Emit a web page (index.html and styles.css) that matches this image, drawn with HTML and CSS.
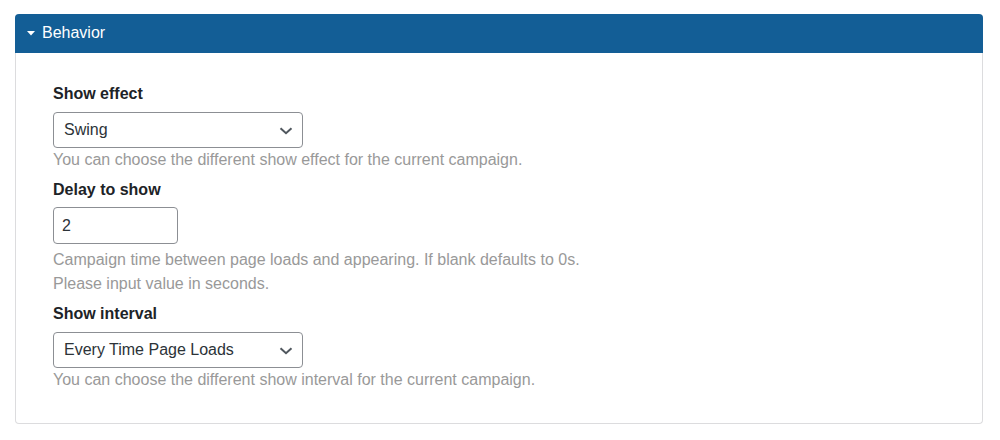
FILE: index.html
```html
<!DOCTYPE html>
<html>
<head>
<meta charset="utf-8">
<link rel="stylesheet" href="styles.css">
</head>
<body>
<div class="panel">
  <div class="panel-head">
    <svg class="caret" width="8" height="5" viewBox="0 0 8 5"><path d="M0 0H8L4 4.5Z" fill="#fff"/></svg>
    <span>Behavior</span>
  </div>
  <div class="panel-body">
    <div class="field">
      <div class="label">Show effect</div>
      <div class="select wide">
        <span>Swing</span>
        <svg class="chev" width="14" height="8" viewBox="0 0 14 8"><path d="M1.5 1.2L7 6.2L12.5 1.2" fill="none" stroke="#50575e" stroke-width="2"/></svg>
      </div>
      <div class="help">You can choose the different show effect for the current campaign.</div>
    </div>
    <div class="field">
      <div class="label">Delay to show</div>
      <div class="input">2</div>
      <div class="help help-after-input">Campaign time between page loads and appearing. If blank defaults to 0s.<br>Please input value in seconds.</div>
    </div>
    <div class="field">
      <div class="label">Show interval</div>
      <div class="select wide">
        <span>Every Time Page Loads</span>
        <svg class="chev" width="14" height="8" viewBox="0 0 14 8"><path d="M1.5 1.2L7 6.2L12.5 1.2" fill="none" stroke="#50575e" stroke-width="2"/></svg>
      </div>
      <div class="help">You can choose the different show interval for the current campaign.</div>
    </div>
  </div>
</div>
</body>
</html>
```
FILE: styles.css
```css
* { box-sizing: border-box; }
html, body { margin: 0; padding: 0; background: #fff; }
body {
  font-family: "Liberation Sans", Arial, sans-serif;
  font-size: 16px;
  line-height: 24px;
  color: #1d2327;
  padding: 14px 17px 0 15px;
}
.panel {
  border: 1px solid #dcdcde;
  border-top: none;
  border-radius: 4px;
  background: #fff;
}
.panel-head {
  height: 39px;
  margin: 0 -1px;
  background: #135e96;
  color: #fff;
  border-radius: 4px 4px 0 0;
  display: flex;
  align-items: center;
  padding-left: 12px;
  padding-bottom: 1px;
}
.caret { margin-right: 7px; margin-top: 1px; }
.panel-body {
  padding: 29px 37px 31px 37px;
  display: flex;
  flex-direction: column;
  gap: 6px;
}
.label {
  font-weight: bold;
  color: #1d2327;
  margin-bottom: 6px;
}
.select {
  height: 36px;
  border: 1px solid #8c8f94;
  border-radius: 4px;
  display: flex;
  align-items: center;
  justify-content: space-between;
  padding: 0 9px 0 10px;
  color: #2c3338;
}
.select.wide { width: 250px; }
.chev { margin-top: 1px; }
.input {
  width: 125px;
  height: 37px;
  border: 1px solid #8c8f94;
  border-radius: 4px;
  display: flex;
  align-items: center;
  padding: 0 8px;
  color: #2c3338;
  margin-top: -1px;
}
.help {
  color: #999;
}
.help-after-input { margin-top: 4px; }
```
